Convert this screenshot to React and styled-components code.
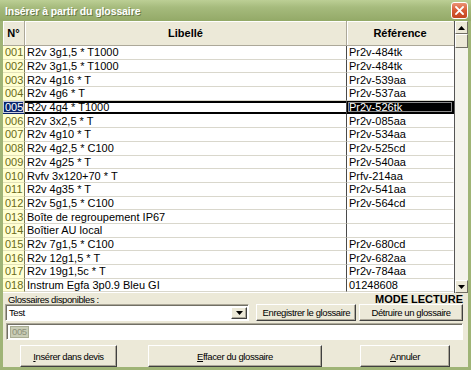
import React from 'react';
import styled, { createGlobalStyle } from 'styled-components';

const Global = createGlobalStyle`
  html, body { margin: 0; padding: 0; background: #ffffff; }
  body { font-family: "Liberation Sans", Arial, sans-serif; font-size: 11px; color: #000; }
  * { box-sizing: border-box; }
`;

const FONT = `"Liberation Sans", Arial, sans-serif`;

const Window = styled.div`
  width: 471px;
  height: 370px;
  display: flex;
  flex-direction: column;
  background: #9fb476;
  overflow: hidden;
`;

const TitleBar = styled.div`
  height: 21px;
  flex: none;
  display: flex;
  align-items: center;
  justify-content: space-between;
  padding: 0 3px 0 5px;
  background: linear-gradient(#bccf95 0%, #a6bb7d 35%, #93a967 100%);
`;

const Title = styled.div`
  color: #ffffff;
  font-family: ${FONT};
  font-weight: bold;
  font-size: 10.5px;
  letter-spacing: -0.1px;
  text-shadow: 1px 1px 0 #6a7b49;
`;

const CloseButton = styled.div`
  width: 17px;
  height: 17px;
  border: 1px solid #ffffff;
  border-radius: 3px;
  background: linear-gradient(#eb9275 0%, #d65a34 50%, #c44520 100%);
  display: flex;
  align-items: center;
  justify-content: center;
`;

const Body = styled.div`
  flex: 1;
  margin: 0 3px 3px 3px;
  background: #ece9d8;
  display: flex;
  flex-direction: column;
`;

const GridArea = styled.div`
  height: 272px;
  flex: none;
  display: flex;
  background: #ffffff;
`;

const Table = styled.div`
  width: 452px;
  display: flex;
  flex-direction: column;
  border-right: 1px solid #555555;
`;

const COLS = '22px 322px 1fr';

const HeaderRow = styled.div`
  height: 25px;
  flex: none;
  display: grid;
  grid-template-columns: ${COLS};
  background: #ece9d8;
  border-bottom: 1px solid #aca899;
`;

const HeaderCell = styled.div`
  display: flex;
  align-items: center;
  justify-content: center;
  font-family: ${FONT};
  font-weight: bold;
  font-size: 11px;
  color: #000;
  border-right: 1px solid ${p => (p.$last ? 'transparent' : '#aca899')};
  box-shadow: inset 1px 1px 0 #ffffff;
`;

const Rows = styled.div`
  flex: 1;
  overflow: hidden;
`;

const Row = styled.div`
  height: 13.7px;
  display: grid;
  grid-template-columns: ${COLS};
`;

const NumCell = styled.div`
  display: flex;
  align-items: center;
  padding-left: 2px;
  font-family: ${FONT};
  font-size: 11px;
  background: ${p => (p.$selected ? '#0a246a' : '#ffffd2')};
  color: ${p => (p.$selected ? '#ffffff' : '#6a6a18')};
  border-right: 1px solid #7d7b55;
  border-bottom: 1px solid ${p => (p.$selected ? '#0a246a' : '#e4e2b8')};
  box-shadow: ${p => (p.$selected ? 'inset 0 0 0 1px #c8cde0' : 'none')};
  white-space: nowrap;
  overflow: hidden;
`;

const TextCell = styled.div`
  display: flex;
  align-items: center;
  padding-left: 2px;
  font-family: ${FONT};
  font-size: 11px;
  white-space: nowrap;
  overflow: hidden;
  color: ${p => (p.$inverse ? '#ffffff' : '#000000')};
  background: ${p => (p.$inverse ? '#000000' : '#ffffff')};
  border-right: 1px solid ${p => (p.$divider ? '#4a4a4a' : 'transparent')};
  border-bottom: 1px solid ${p => (p.$selected ? '#000000' : '#d9d7cc')};
  box-shadow: ${p =>
    p.$inverse
      ? 'inset 0 0 0 1px #000, inset 0 0 0 2px #8c8c8c'
      : p.$selected
      ? 'inset 0 2px 0 #000, inset 0 -1px 0 #000'
      : 'none'};
`;

const ScrollBar = styled.div`
  width: 13px;
  flex: none;
  display: flex;
  flex-direction: column;
  background: #f4f3ec;
`;

const ScrollButton = styled.div`
  height: 13px;
  flex: none;
  display: flex;
  align-items: center;
  justify-content: center;
  background: #ece9d8;
  border-style: solid;
  border-width: 1px;
  border-color: #ffffff #716f64 #716f64 #ffffff;
`;

const Thumb = styled.div`
  height: 14px;
  flex: none;
  background: #ece9d8;
  border-style: solid;
  border-width: 1px;
  border-color: #ffffff #716f64 #716f64 #ffffff;
`;

const Track = styled.div`
  flex: 1;
`;

const Bottom = styled.div`
  flex: 1;
  display: flex;
  flex-direction: column;
  padding: 0 5px 0 2px;
`;

const LabelRow = styled.div`
  height: 11px;
  display: flex;
  align-items: center;
  justify-content: space-between;
  padding: 1px 0 0 3px;
`;

const Label = styled.span`
  font-family: ${FONT};
  font-size: ${p => (p.$bold ? 11 : 9.5)}px;
  letter-spacing: ${p => (p.$bold ? 0 : -0.4)}px;
  font-weight: ${p => (p.$bold ? 'bold' : 'normal')};
  color: #000;
  line-height: 11px;
`;

const ControlRow = styled.div`
  height: 17px;
  display: flex;
  align-items: stretch;
`;

const Combo = styled.div`
  width: 245px;
  margin-right: 7px;
  display: flex;
  background: #ffffff;
  border-style: solid;
  border-width: 1px;
  border-color: #aca899 #ffffff #ffffff #aca899;
  box-shadow: inset 1px 1px 0 #716f64;
`;

const ComboText = styled.div`
  flex: 1;
  display: flex;
  align-items: center;
  padding-left: 3px;
  font-family: ${FONT};
  font-size: 9.5px;
  letter-spacing: -0.4px;
`;

const ComboArrow = styled.div`
  width: 16px;
  margin: 2px 1px 1px 0;
  display: flex;
  align-items: center;
  justify-content: center;
  background: #ece9d8;
  border-style: solid;
  border-width: 1px;
  border-color: #ffffff #404040 #404040 #ffffff;
  box-shadow: inset -1px -1px 0 #aca899;
`;

const Button = styled.div`
  width: ${p => p.$w}px;
  margin-left: ${p => p.$ml || 0}px;
  display: flex;
  align-items: center;
  justify-content: center;
  font-family: ${FONT};
  font-size: 9.5px;
  letter-spacing: -0.4px;
  color: #000;
  background: #ece9d8;
  border-style: solid;
  border-width: 1px;
  border-color: #ffffff #404040 #404040 #ffffff;
  box-shadow: inset -1px -1px 0 #aca899;
  white-space: nowrap;
`;

const Underline = styled.span`
  text-decoration: underline;
`;

const Input = styled.div`
  height: 17px;
  margin-top: 2px;
  margin-left: 1px;
  display: flex;
  align-items: center;
  padding-left: 3px;
  background: #ffffff;
  border-style: solid;
  border-width: 1px;
  border-color: #aca899 #ffffff #ffffff #aca899;
  box-shadow: inset 1px 1px 0 #716f64;
`;

const Selection = styled.span`
  font-family: ${FONT};
  font-size: 9.5px;
  letter-spacing: -0.4px;
  line-height: 10px;
  padding: 0 1px;
  background: #c9cdb6;
  color: #8e927c;
  border: 1px solid #a9ad94;
`;

const ActionRow = styled.div`
  height: 22px;
  margin-top: 5px;
  display: flex;
  padding-left: 15px;
`;

const rows = [
  ['001', 'R2v 3g1,5 * T1000', 'Pr2v-484tk'],
  ['002', 'R2v 3g1,5 * T1000', 'Pr2v-484tk'],
  ['003', 'R2v 4g16 * T', 'Pr2v-539aa'],
  ['004', 'R2v 4g6 * T', 'Pr2v-537aa'],
  ['005', 'R2v 4g4 * T1000', 'Pr2v-526tk'],
  ['006', 'R2v 3x2,5 * T', 'Pr2v-085aa'],
  ['007', 'R2v 4g10 * T', 'Pr2v-534aa'],
  ['008', 'R2v 4g2,5 * C100', 'Pr2v-525cd'],
  ['009', 'R2v 4g25 * T', 'Pr2v-540aa'],
  ['010', 'Rvfv 3x120+70 * T', 'Prfv-214aa'],
  ['011', 'R2v 4g35 * T', 'Pr2v-541aa'],
  ['012', 'R2v 5g1,5 * C100', 'Pr2v-564cd'],
  ['013', 'Boîte de regroupement IP67', ''],
  ['014', 'Boîtier AU local', ''],
  ['015', 'R2v 7g1,5 * C100', 'Pr2v-680cd'],
  ['016', 'R2v 12g1,5 * T', 'Pr2v-682aa'],
  ['017', 'R2v 19g1,5c * T', 'Pr2v-784aa'],
  ['018', 'Instrum Egfa 3p0.9 Bleu GI', '01248608'],
];

const Up = () => (
  <svg width="7" height="4" viewBox="0 0 7 4"><path d="M0 4 L3.5 0 L7 4 Z" fill="#000" /></svg>
);
const Down = () => (
  <svg width="7" height="4" viewBox="0 0 7 4"><path d="M0 0 L3.5 4 L7 0 Z" fill="#000" /></svg>
);

export default function App() {
  return (
    <>
      <Global />
      <Window>
        <TitleBar>
          <Title>Insérer à partir du glossaire</Title>
          <CloseButton>
            <svg width="9" height="9" viewBox="0 0 9 9">
              <path d="M1 1 L8 8 M8 1 L1 8" stroke="#ffffff" strokeWidth="1.8" strokeLinecap="square" />
            </svg>
          </CloseButton>
        </TitleBar>
        <Body>
          <GridArea>
            <Table>
              <HeaderRow>
                <HeaderCell>N°</HeaderCell>
                <HeaderCell>Libellé</HeaderCell>
                <HeaderCell $last>Référence</HeaderCell>
              </HeaderRow>
              <Rows>
                {rows.map(([n, lib, ref]) => {
                  const sel = n === '005';
                  return (
                    <Row key={n}>
                      <NumCell $selected={sel}>{n}</NumCell>
                      <TextCell $divider $selected={sel}>{lib}</TextCell>
                      <TextCell $inverse={sel} $selected={sel}>{ref}</TextCell>
                    </Row>
                  );
                })}
              </Rows>
            </Table>
            <ScrollBar>
              <ScrollButton><Up /></ScrollButton>
              <Thumb />
              <Track />
              <ScrollButton><Down /></ScrollButton>
            </ScrollBar>
          </GridArea>
          <Bottom>
            <LabelRow>
              <Label>Glossaires disponibles :</Label>
              <Label $bold>MODE LECTURE</Label>
            </LabelRow>
            <ControlRow>
              <Combo>
                <ComboText>Test</ComboText>
                <ComboArrow><Down /></ComboArrow>
              </Combo>
              <Button $w={100}>Enregistrer le glossaire</Button>
              <Button $w={104} $ml={3}>Détruire un glossaire</Button>
            </ControlRow>
            <Input>
              <Selection>005</Selection>
            </Input>
            <ActionRow>
              <Button $w={97}><span><Underline>I</Underline>nsérer dans devis</span></Button>
              <Button $w={174} $ml={31}><span><Underline>E</Underline>ffacer du glossaire</span></Button>
              <Button $w={90} $ml={38}><span><Underline>A</Underline>nnuler</span></Button>
            </ActionRow>
          </Bottom>
        </Body>
      </Window>
    </>
  );
}
